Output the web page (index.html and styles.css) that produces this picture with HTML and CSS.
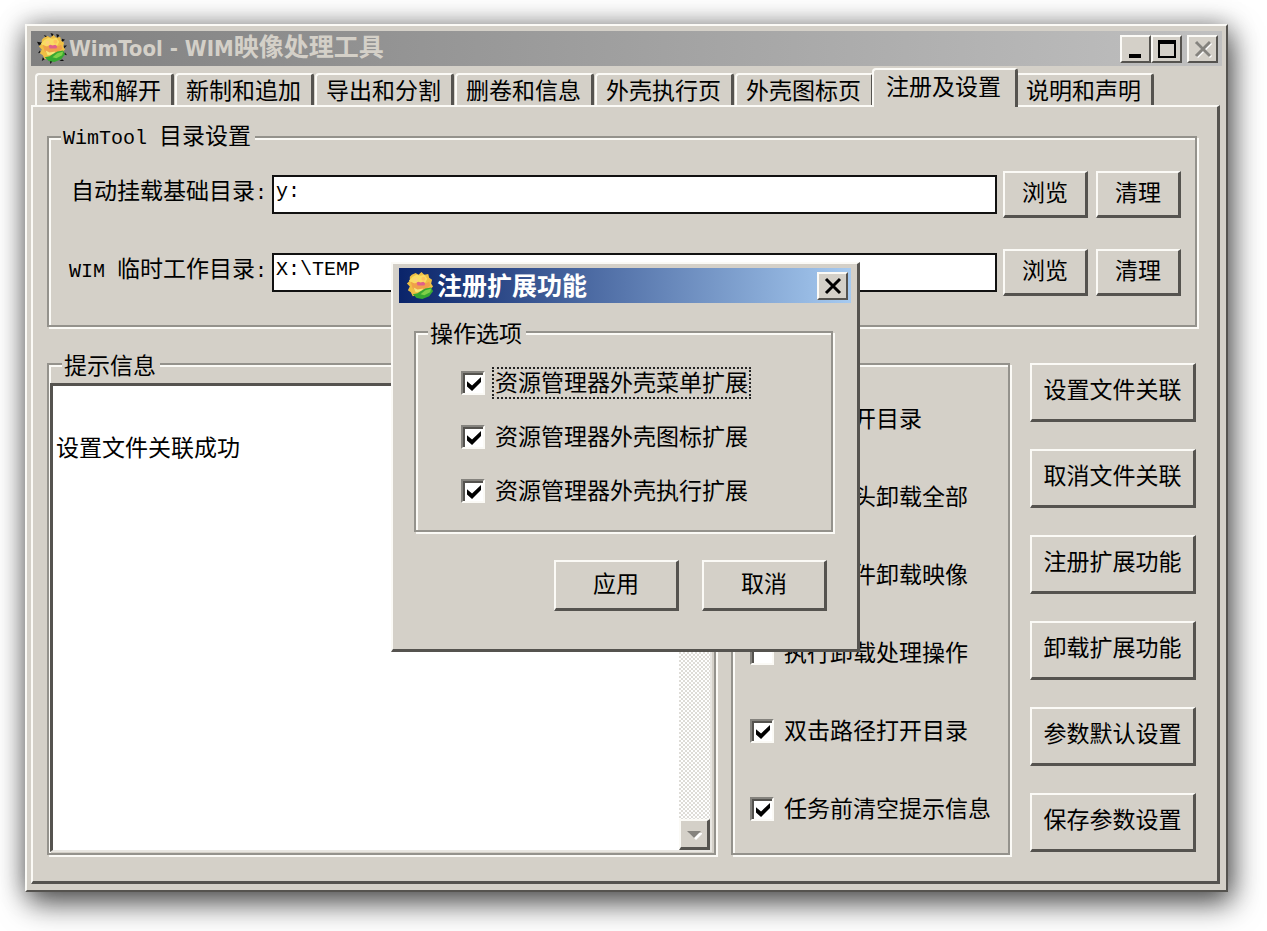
FILE: index.html
```html
<!DOCTYPE html>
<html lang="zh-CN">
<head>
    <meta charset="UTF-8">
    <meta name="viewport" content="width=device-width, initial-scale=1.0">
    <title>WimTool - WIM映像处理工具</title>
    <link rel="stylesheet" href="styles.css">
</head>
<body>
    <svg width="0" height="0" class="defs" aria-hidden="true">
        <defs>
            <symbol id="spikes" viewBox="0 0 32 32">
                <path d="M1 9l6 1-4 3zM8 2l3 1 1 4zM15 0l3 1-1 4zM21 1l3 1-2 4zM27 6l3 1-4 3zM29 13h3l-3 3zM30 20l2 3-4-1zM27 27l2 2-5 0zM17 29l-2 3-1-4zM9 27l-3 2 1-4zM5 20l-3 1 2-3z" fill="#111"/>
            </symbol>
            <symbol id="flower" viewBox="0 0 32 32">
                <path d="M8 5l4-2 3 2 3-3 3 3 4-1 1 4 3 2-1 4 2 3-3 3-1 4-5 1-4 3-4-2-4 1-2-4-3-2 2-4-3-3 3-3 0-4z" fill="#efbf45"/>
                <path d="M9 7l4-2 4 1 4-1 3 4-2 4-13 1-4-3z" fill="#f9dc62"/>
                <path d="M7 12l4 2 4-1 7 1 4-2 1 4-4 4-9 1-5-2z" fill="#f0a04a"/>
                <path d="M13 13l2-1 2 1 3-1 2 2-1 2-7 0z" fill="#e0608a"/>
                <circle cx="12" cy="10" r="2" fill="#ffcf78"/>
                <circle cx="20" cy="9" r="2" fill="#ffc25c"/>
                <path d="M10 18l4 2 6-1-2 3-6 1z" fill="#f5e878"/>
                <path d="M9 25l5-1 3-2 5-3 6-1 2 4-4 5-7 3-6-1z" fill="#37a832"/>
                <path d="M17 25l5-4 6-2-1 4-6 3z" fill="#7ed048"/>
            </symbol>
        </defs>
    </svg>

    <main class="window">
        <header class="titlebar">
            <svg class="logo" aria-hidden="true"><use href="#spikes"/><use href="#flower"/></svg>
            <h1 class="title"><span class="title-latin">WimTool - WIM</span>映像处理工具</h1>
            <div class="controls">
                <button class="control" aria-label="最小化"><svg viewBox="0 0 24 20"><path d="M5 15h12v4H5z"/></svg></button>
                <button class="control" aria-label="最大化"><svg viewBox="0 0 24 20"><path d="M3 1h18v18H3zM5 5v12h14V5z" fill-rule="evenodd"/></svg></button>
                <button class="control close" aria-label="关闭" disabled><svg viewBox="0 0 24 20"><path d="M6 4l14 14M20 4L6 18" stroke="#fff" stroke-width="3"/><path d="M5 3l14 14M19 3L5 17" stroke="#85837e" stroke-width="3"/></svg></button>
            </div>
        </header>

        <nav class="tabs" role="tablist">
            <button class="tab" role="tab">挂载和解开</button>
            <button class="tab" role="tab">新制和追加</button>
            <button class="tab" role="tab">导出和分割</button>
            <button class="tab" role="tab">删卷和信息</button>
            <button class="tab" role="tab">外壳执行页</button>
            <button class="tab" role="tab">外壳图标页</button>
            <button class="tab active" role="tab" aria-selected="true">注册及设置</button>
            <button class="tab" role="tab">说明和声明</button>
        </nav>

        <section class="panel">
            <fieldset class="group paths">
                <legend><span class="latin">WimTool </span>目录设置</legend>
                <div class="row">
                    <label for="mount-dir">自动挂载基础目录<span class="latin">:</span></label>
                    <input type="text" class="path" id="mount-dir" value="y:">
                    <button class="btn small">浏览</button>
                    <button class="btn small">清理</button>
                </div>
                <div class="row">
                    <label for="temp-dir"><span class="latin">WIM </span>临时工作目录<span class="latin">:</span></label>
                    <input type="text" class="path" id="temp-dir" value="X:\TEMP">
                    <button class="btn small">浏览</button>
                    <button class="btn small">清理</button>
                </div>
            </fieldset>

            <div class="lower">
                <fieldset class="group messages">
                    <legend>提示信息</legend>
                    <div class="log">
                        <textarea class="log-text" aria-label="提示信息" readonly>


设置文件关联成功</textarea>
                        <div class="scrollbar">
                            <button class="scroll-btn" aria-label="向上" disabled><svg viewBox="0 0 16 16"><path d="M1 11h14L8 4z" fill="#85837e"/></svg></button>
                            <button class="scroll-btn" aria-label="向下" disabled><svg viewBox="0 0 16 16"><path d="M3 7h14l-7 7z" fill="#fff"/><path d="M1 5h14l-7 7z" fill="#85837e"/></svg></button>
                        </div>
                    </div>
                </fieldset>

                <fieldset class="group options">
                    <legend>参数设置</legend>
                    <label class="check"><input type="checkbox" checked><span>挂载打开目录</span></label>
                    <label class="check"><input type="checkbox"><span>从尾到头卸载全部</span></label>
                    <label class="check"><input type="checkbox"><span>按照文件卸载映像</span></label>
                    <label class="check"><input type="checkbox"><span>执行卸载处理操作</span></label>
                    <label class="check"><input type="checkbox" checked><span>双击路径打开目录</span></label>
                    <label class="check"><input type="checkbox" checked><span>任务前清空提示信息</span></label>
                </fieldset>

                <div class="actions">
                    <button class="btn">设置文件关联</button>
                    <button class="btn">取消文件关联</button>
                    <button class="btn">注册扩展功能</button>
                    <button class="btn">卸载扩展功能</button>
                    <button class="btn">参数默认设置</button>
                    <button class="btn">保存参数设置</button>
                </div>
            </div>
        </section>

        <dialog class="dialog" open aria-labelledby="dialog-title">
            <header class="titlebar blue">
                <svg class="logo" aria-hidden="true"><use href="#flower"/></svg>
                <h2 class="title" id="dialog-title">注册扩展功能</h2>
                <div class="controls">
                    <button class="control" aria-label="关闭"><svg viewBox="0 0 24 20"><path d="M5 3l14 14M19 3L5 17" stroke="#000" stroke-width="3"/></svg></button>
                </div>
            </header>
            <div class="dialog-body">
                <fieldset class="group choices">
                    <legend>操作选项</legend>
                    <label class="check focused"><input type="checkbox" checked><span>资源管理器外壳菜单扩展</span></label>
                    <label class="check"><input type="checkbox" checked><span>资源管理器外壳图标扩展</span></label>
                    <label class="check"><input type="checkbox" checked><span>资源管理器外壳执行扩展</span></label>
                </fieldset>
                <div class="dialog-buttons">
                    <button class="btn">应用</button>
                    <button class="btn">取消</button>
                </div>
            </div>
        </dialog>
    </main>
</body>
</html>
```
FILE: styles.css
```css
:root {
    --face: #d4d0c8;
    --light: #fbfaf6;
    --shade: #85837e;
    --dark: #55534f;
}
* {
    box-sizing: border-box;
}
body {
    min-height: 100vh;
    margin: 0;
    padding: 24px 39px 24px 25px;
    background: #fff;
    color: #000;
    font: 23px/24px "Noto Sans CJK SC", sans-serif;
}
button, input, textarea {
    margin: 0;
    padding: 0;
    border-radius: 0;
    font: inherit;
    color: inherit;
}
.defs {
    position: absolute;
}
.latin {
    font-family: "Liberation Mono", monospace;
    font-size: 20px;
    white-space: pre;
}

/* window */
.window {
    position: relative;
    min-width: 1100px;
    padding: 5px 4px 6px;
    background: var(--face);
    border: 2px solid;
    border-color: var(--light) var(--dark) var(--dark) var(--light);
    box-shadow: 0 0 24px rgba(0, 0, 0, 0.35), 4px 12px 28px rgba(0, 0, 0, 0.6);
}
.titlebar {
    display: flex;
    align-items: center;
    height: 35px;
    padding: 0 4px 0 5px;
    background: linear-gradient(to right, #808080, #c0c0c0);
    color: var(--face);
}
.titlebar.blue {
    padding-right: 3px;
    background: linear-gradient(to right, #0a246a, #a6caf0);
    color: #fff;
}
.logo {
    width: 31px;
    height: 31px;
    flex: none;
}
.title {
    flex: 1;
    margin: 0 0 0 2px;
    padding-bottom: 3px;
    font-size: 25px;
    line-height: 32px;
    font-weight: bold;
    white-space: nowrap;
}
.title-latin {
    font-family: "DejaVu Sans Condensed", "DejaVu Sans", sans-serif;
    font-size: 22px;
}
.controls {
    display: flex;
}
.control {
    width: 31px;
    height: 28px;
    background: var(--face);
    border: 2px solid;
    border-color: var(--light) var(--dark) var(--dark) var(--light);
}
.control svg {
    display: block;
    width: 24px;
    height: 20px;
    margin: auto;
}
.control.close {
    margin-left: 5px;
}

/* tabs */
.tabs {
    display: flex;
    align-items: flex-end;
    gap: 1px;
    height: 39px;
    padding-left: 4px;
}
.tab {
    height: 32px;
    padding: 0 10px 3px 9px;
    background: var(--face);
    border: solid;
    border-width: 2px 3px 0 2px;
    border-color: var(--light) var(--dark) var(--light) var(--light);
    border-radius: 4px 3px 0 0;
    white-space: nowrap;
}
.tab.active {
    position: relative;
    height: 39px;
    margin: 0 -4px -2px -3px;
    padding: 0 14px 7px 12px;
}
.panel {
    margin-right: 2px;
    padding: 15px 20px 26px 14px;
    border: solid;
    border-width: 2px 3px 3px 2px;
    border-color: var(--light) var(--dark) var(--dark) var(--light);
}

/* groups */
.group {
    min-width: 0;
    margin: 0;
    padding: 0;
    border: 2px solid #94928c;
    box-shadow: 2px 2px 0 var(--light), inset 2px 2px 0 var(--light);
}
.group legend {
    margin-left: 12px;
    padding: 0 4px 0 2px;
    background: var(--face);
    line-height: 24px;
}
.paths {
    display: flex;
    flex-direction: column;
    gap: 31px;
    padding: 20px 0 29px;
}
.row {
    display: flex;
    align-items: center;
    padding: 0 14px 0 20px;
}
.row label {
    width: 203px;
    padding: 0 5px 6px 0;
    text-align: right;
    white-space: nowrap;
}
.path {
    flex: 1;
    min-width: 0;
    height: 39px;
    margin-right: 6px;
    padding: 0 2px 6px;
    background: #fff;
    border: 2px solid #111;
    font: 20px/24px "Liberation Mono", monospace;
}
.btn {
    padding-bottom: 6px;
    background: var(--face);
    border: solid;
    border-width: 2px 3px 3px 2px;
    border-color: var(--light) var(--dark) var(--dark) var(--light);
    white-space: nowrap;
}
.small {
    width: 85px;
    height: 47px;
}
.small + .small {
    margin-left: 8px;
}

/* lower part */
.lower {
    display: flex;
    margin-top: 25px;
}
.messages {
    display: flex;
    flex: 1;
    padding: 7px 2px 1px 1px;
}
.log {
    display: flex;
    flex: 1;
    height: 100%;
    background: #fff;
    border: solid;
    border-width: 3px 2px 2px 3px;
    border-color: var(--dark) #e8e6e1 #e8e6e1 var(--dark);
}
.log-text {
    flex: 1;
    min-width: 0;
    padding: 0 3px;
    border: 0;
    background: none;
    outline: none;
    resize: none;
    overflow: hidden;
    line-height: 24px;
}
.scrollbar {
    display: flex;
    flex-direction: column;
    justify-content: space-between;
    width: 31px;
    background: repeating-conic-gradient(#dedcd7 0 25%, #fff 0 50%) 0 0 / 4px 4px;
}
.scroll-btn {
    height: 31px;
    background: var(--face);
    border: solid;
    border-width: 2px 3px 3px 2px;
    border-color: var(--light) var(--dark) var(--dark) var(--light);
}
.scroll-btn svg {
    display: block;
    width: 16px;
    height: 16px;
    margin: auto;
}
.options {
    display: flex;
    flex-direction: column;
    gap: 54px;
    width: 279px;
    margin: 0 20px 0 15px;
    padding-top: 31px;
}
.actions {
    display: flex;
    flex-direction: column;
    gap: 27px;
    padding: 11px 1px 3px 0;
}
.actions .btn {
    width: 166px;
    height: 59px;
    padding-bottom: 8px;
}

/* check boxes */
.check {
    display: flex;
    align-items: center;
    height: 24px;
    padding-left: 17px;
    white-space: nowrap;
}
.check input {
    appearance: none;
    flex: none;
    width: 24px;
    height: 24px;
    margin-right: 8px;
    background: #fff;
    border: 2px solid;
    border-color: var(--shade) var(--light) var(--light) var(--shade);
    box-shadow: inset 2px 2px 0 var(--dark);
}
.check input:checked::before {
    content: "";
    display: block;
    width: 14px;
    height: 14px;
    margin: 4px;
    background: #000;
    clip-path: polygon(0 30%, 36% 60%, 100% 0, 100% 36%, 36% 100%, 0 68%);
}
.check span {
    padding: 0 2px 4px;
    line-height: 26px;
}
.check.focused span {
    outline: 2px dotted #222;
    outline-offset: -1px;
}

/* dialog */
.dialog {
    position: absolute;
    left: 364px;
    top: 236px;
    width: 469px;
    margin: 0;
    padding: 4px 6px 6px;
    background: var(--face);
    color: #000;
    border: solid;
    border-width: 2px 3px 3px 2px;
    border-color: var(--light) var(--dark) var(--dark) var(--light);
}
.dialog-body {
    padding: 17px 18px 32px 15px;
}
.choices {
    display: flex;
    flex-direction: column;
    gap: 30px;
    padding: 27px 0;
}
.choices .check {
    padding-left: 45px;
}
.dialog-buttons {
    display: flex;
    justify-content: flex-end;
    gap: 23px;
    margin-top: 28px;
    padding-right: 6px;
}
.dialog-buttons .btn {
    width: 125px;
    height: 51px;
}
```
